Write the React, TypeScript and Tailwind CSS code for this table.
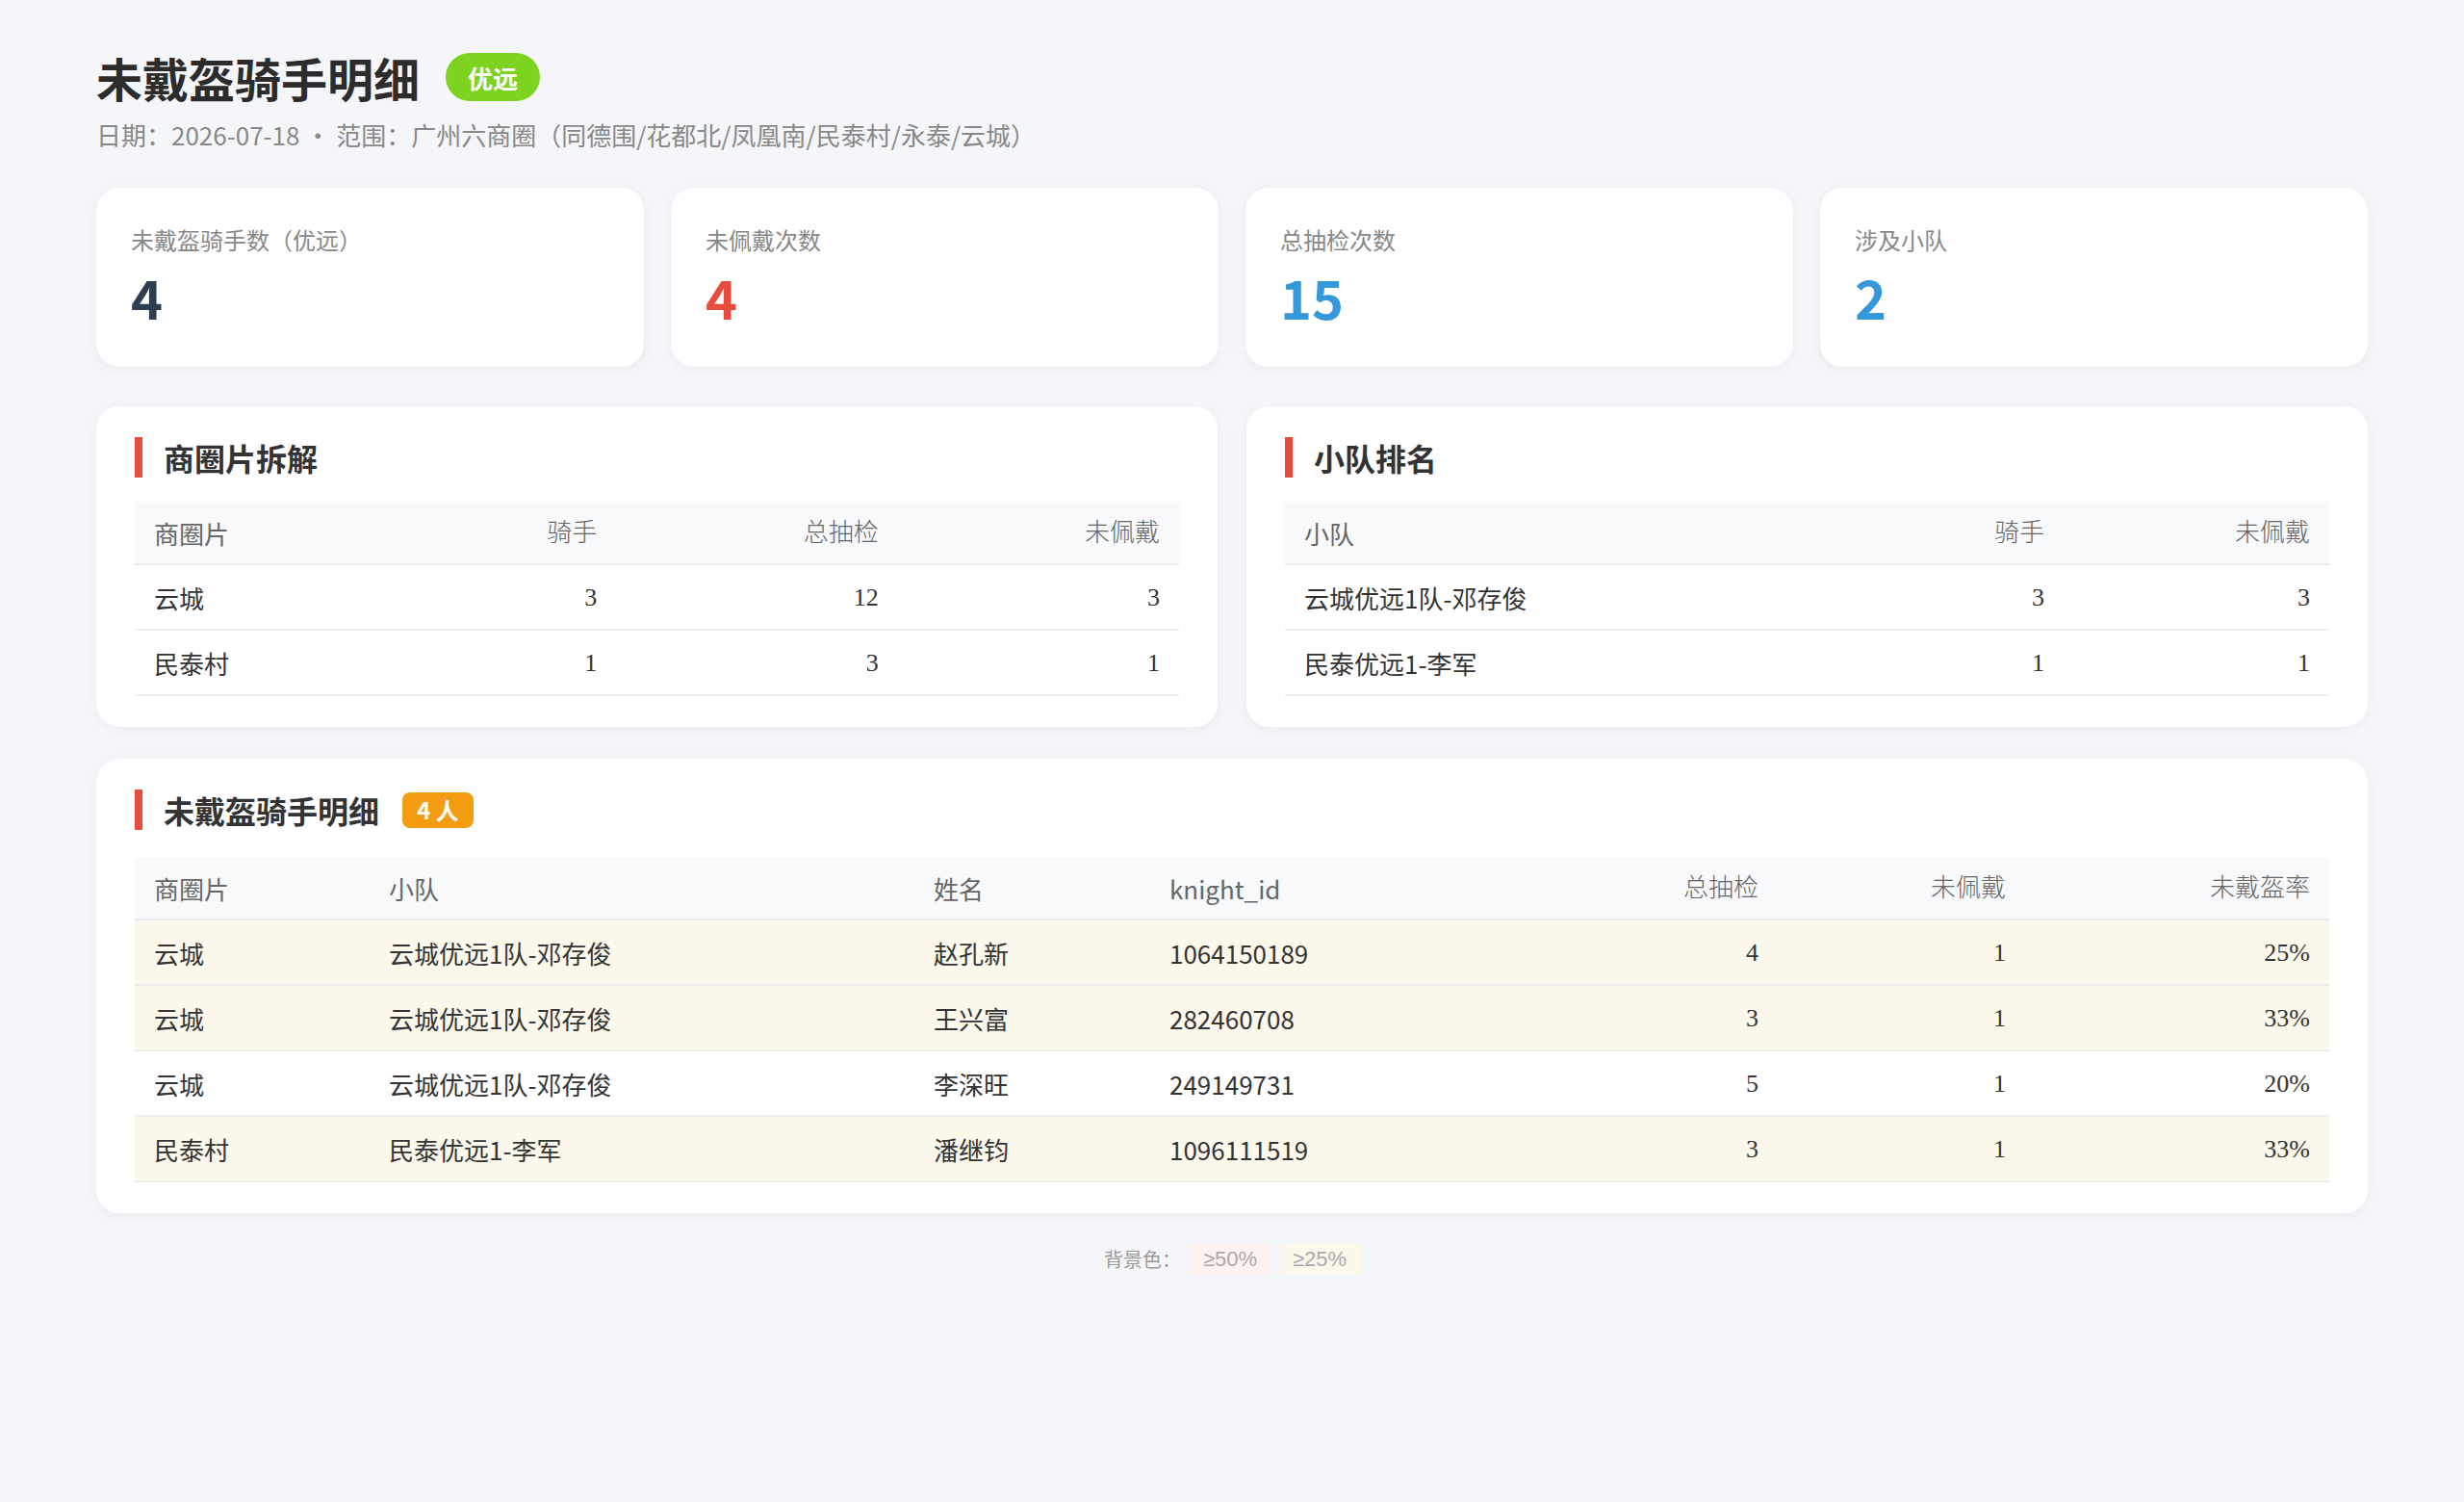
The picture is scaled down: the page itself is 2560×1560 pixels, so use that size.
const SANS = "font-['Noto_Sans_CJK_SC','Noto_Sans',sans-serif]";
const NUM = "font-['Liberation_Serif','Noto_Sans_CJK_SC',serif]";
const LATIN = "font-['Liberation_Sans','Noto_Sans_CJK_SC',sans-serif]";

type Stat = { label: string; value: string; color: string };

const STATS: Stat[] = [
  { label: "未戴盔骑手数（优远）", value: "4", color: "text-[#2c3e50]" },
  { label: "未佩戴次数", value: "4", color: "text-[#e74c3c]" },
  { label: "总抽检次数", value: "15", color: "text-[#3498db]" },
  { label: "涉及小队", value: "2", color: "text-[#3498db]" },
];

const AREAS = [
  { area: "云城", riders: 3, checks: 12, missing: 3 },
  { area: "民泰村", riders: 1, checks: 3, missing: 1 },
];

const TEAMS = [
  { team: "云城优远1队-邓存俊", riders: 3, missing: 3 },
  { team: "民泰优远1-李军", riders: 1, missing: 1 },
];

const RIDERS = [
  { area: "云城", team: "云城优远1队-邓存俊", name: "赵孔新", id: "1064150189", checks: 4, missing: 1, rate: 25 },
  { area: "云城", team: "云城优远1队-邓存俊", name: "王兴富", id: "282460708", checks: 3, missing: 1, rate: 33 },
  { area: "云城", team: "云城优远1队-邓存俊", name: "李深旺", id: "249149731", checks: 5, missing: 1, rate: 20 },
  { area: "民泰村", team: "民泰优远1-李军", name: "潘继钧", id: "1096111519", checks: 3, missing: 1, rate: 33 },
];

function rowBg(rate: number) {
  if (rate >= 50) return "bg-[#fdf2f0]";
  if (rate >= 25) return "bg-[#fdf8ec]";
  return "bg-white";
}

function SectionTitle({ children, gapBelow = "mb-[25px]" }: { children: React.ReactNode; gapBelow?: string }) {
  return (
    <div className={`${gapBelow} flex h-[42px] items-center gap-[24px] border-l-[8px] border-[#e74c3c] pl-[22px]`}>
      {children}
    </div>
  );
}

export default function App() {
  return (
    <main className={`min-h-screen bg-[#f5f6fa] px-[100px] pb-[60px] pt-[49px] ${SANS}`}>
      <header>
        <div className="flex items-center gap-[27px]">
          <h1 className="text-[48px] font-bold leading-[62px] text-[#2c2c2c]">未戴盔骑手明细</h1>
          <span className="flex h-[50px] w-[98px] items-center justify-center rounded-full bg-[#7ed321] text-[26px] font-bold text-white">
            优远
          </span>
        </div>
        <p className="mt-[9px] text-[26px] leading-[39px] text-[#888]">
          日期：2026-07-18 · 范围：广州六商圈（同德围/花都北/凤凰南/民泰村/永泰/云城）
        </p>
      </header>

      <section className="mt-[36px] grid grid-cols-4 gap-[28px]">
        {STATS.map((s) => (
          <div
            className="h-[186px] rounded-[24px] bg-white px-[36px] pt-[36px] shadow-[0_2px_12px_rgba(0,0,0,0.05)]"
            key={s.label}
          >
            <p className="text-[24px] leading-[36px] text-[#888]">{s.label}</p>
            <p className={`mt-[7px] text-[56px] font-bold leading-[68px] ${s.color}`}>{s.value}</p>
          </div>
        ))}
      </section>

      <section className="mt-[41px] grid grid-cols-2 gap-[30px]">
        <div className="rounded-[24px] bg-white px-[40px] py-[32px] shadow-[0_2px_12px_rgba(0,0,0,0.05)]">
          <SectionTitle>
            <h2 className="text-[32px] font-bold text-[#333]">商圈片拆解</h2>
          </SectionTitle>
          <div className="grid h-[66px] grid-cols-[208px_1fr_1fr_1fr] items-center border-b-2 border-[#eee] bg-[#f8f9fb] text-[26px] text-[#666]">
            <span className="px-[20px]">商圈片</span>
            <span className={`px-[20px] text-right font-light ${NUM}`}>骑手</span>
            <span className={`px-[20px] text-right font-light ${NUM}`}>总抽检</span>
            <span className={`px-[20px] text-right font-light ${NUM}`}>未佩戴</span>
          </div>
          {AREAS.map((a) => (
            <div
              className="grid h-[68px] grid-cols-[208px_1fr_1fr_1fr] items-center border-b-2 border-[#eee] text-[26px] text-[#333]"
              key={a.area}
            >
              <span className="px-[20px]">{a.area}</span>
              <span className={`px-[20px] text-right ${NUM}`}>{a.riders}</span>
              <span className={`px-[20px] text-right ${NUM}`}>{a.checks}</span>
              <span className={`px-[20px] text-right ${NUM}`}>{a.missing}</span>
            </div>
          ))}
        </div>

        <div className="rounded-[24px] bg-white px-[40px] py-[32px] shadow-[0_2px_12px_rgba(0,0,0,0.05)]">
          <SectionTitle>
            <h2 className="text-[32px] font-bold text-[#333]">小队排名</h2>
          </SectionTitle>
          <div className="grid h-[66px] grid-cols-[1fr_276px_276px] items-center border-b-2 border-[#eee] bg-[#f8f9fb] text-[26px] text-[#666]">
            <span className="px-[20px]">小队</span>
            <span className={`px-[20px] text-right font-light ${NUM}`}>骑手</span>
            <span className={`px-[20px] text-right font-light ${NUM}`}>未佩戴</span>
          </div>
          {TEAMS.map((t) => (
            <div
              className="grid h-[68px] grid-cols-[1fr_276px_276px] items-center border-b-2 border-[#eee] text-[26px] text-[#333]"
              key={t.team}
            >
              <span className="px-[20px]">{t.team}</span>
              <span className={`px-[20px] text-right ${NUM}`}>{t.riders}</span>
              <span className={`px-[20px] text-right ${NUM}`}>{t.missing}</span>
            </div>
          ))}
        </div>
      </section>

      <section className="mt-[33px] rounded-[24px] bg-white px-[40px] py-[32px] shadow-[0_2px_12px_rgba(0,0,0,0.05)]">
        <SectionTitle gapBelow="mb-[28px]">
          <h2 className="text-[32px] font-bold text-[#333]">未戴盔骑手明细</h2>
          <span className="flex h-[37px] w-[74px] items-center justify-center rounded-[8px] bg-[#f39c12] text-[24px] font-bold text-white">
            4 人
          </span>
        </SectionTitle>
        <div className="grid h-[66px] grid-cols-[244px_566px_245px_395px_257px_257px_1fr] items-center border-b-2 border-[#eee] bg-[#f8f9fb] text-[26px] text-[#666]">
          <span className="px-[20px]">商圈片</span>
          <span className="px-[20px]">小队</span>
          <span className="px-[20px]">姓名</span>
          <span className="px-[20px]">knight_id</span>
          <span className={`px-[20px] text-right font-light ${NUM}`}>总抽检</span>
          <span className={`px-[20px] text-right font-light ${NUM}`}>未佩戴</span>
          <span className={`px-[20px] text-right font-light ${NUM}`}>未戴盔率</span>
        </div>
        {RIDERS.map((r) => (
          <div
            className={`grid h-[68px] grid-cols-[244px_566px_245px_395px_257px_257px_1fr] items-center border-b-2 border-[#eee] text-[26px] text-[#333] ${rowBg(r.rate)}`}
            key={r.id}
          >
            <span className="px-[20px]">{r.area}</span>
            <span className="px-[20px]">{r.team}</span>
            <span className="px-[20px]">{r.name}</span>
            <span className="px-[20px]">{r.id}</span>
            <span className={`px-[20px] text-right ${NUM}`}>{r.checks}</span>
            <span className={`px-[20px] text-right ${NUM}`}>{r.missing}</span>
            <span className={`px-[20px] text-right ${NUM}`}>{r.rate}%</span>
          </div>
        ))}
      </section>

      <footer className="mt-[31px] flex items-center justify-center gap-[9px] text-[20px] text-[#999]">
        <span>背景色：</span>
        <span className={`flex h-[33px] items-center rounded-[4px] bg-[#fdf2f0] px-[14px] text-[22px] text-[#aaa] ${LATIN}`}>≥50%</span>
        <span className={`flex h-[33px] items-center rounded-[4px] bg-[#fdf8ec] px-[14px] text-[22px] text-[#aaa] ${LATIN}`}>≥25%</span>
      </footer>
    </main>
  );
}
